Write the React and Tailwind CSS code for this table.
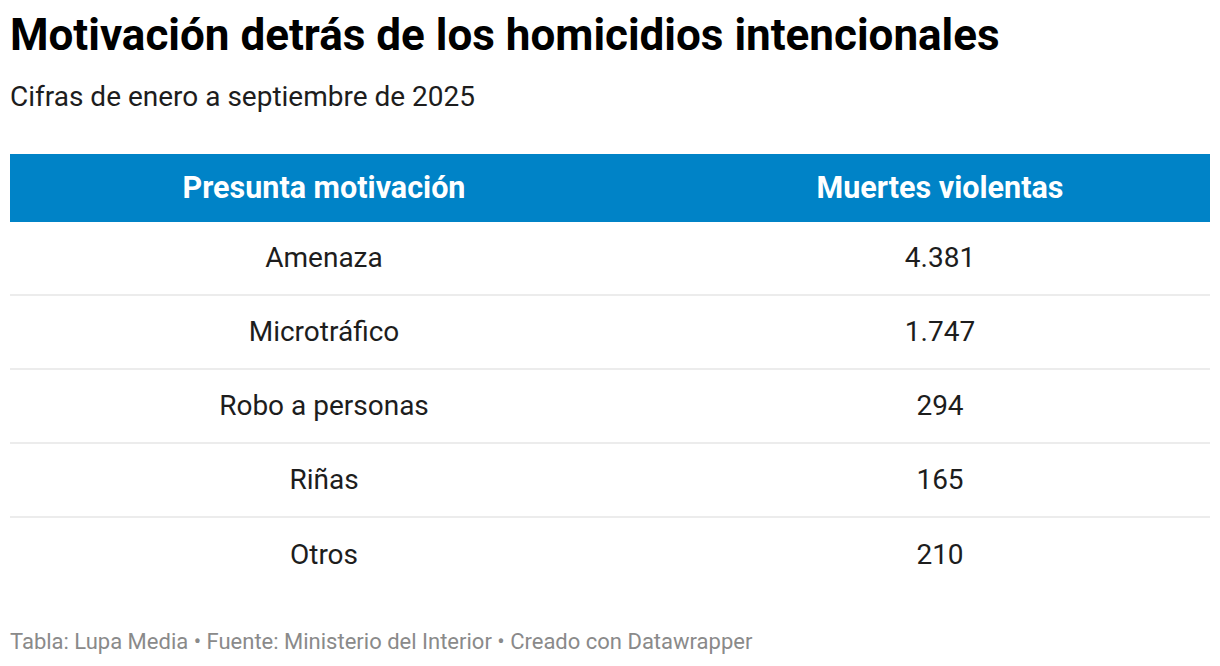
const rows = [
  ["Amenaza", "4.381"],
  ["Microtráfico", "1.747"],
  ["Robo a personas", "294"],
  ["Riñas", "165"],
  ["Otros", "210"],
];

export default function App() {
  return (
    <div className="bg-white min-h-screen w-[1220px] px-[10px] pt-[10px] font-['Roboto',sans-serif] text-[#1d1d1d]">
      <h1 className="text-[44px] font-bold leading-[50px] text-black">
        Motivación detrás de los homicidios intencionales
      </h1>
      <p className="text-[28px] leading-[34px] mt-[20px]">
        Cifras de enero a septiembre de 2025
      </p>

      {/* Table */}
      <div className="mt-[40px]">
        <div className="grid grid-cols-[628px_1fr] bg-[#0083c7] h-[68px] items-center text-white font-bold text-[30.5px]">
          <div className="text-center">Presunta motivación</div>
          <div className="text-center pl-[32px]">Muertes violentas</div>
        </div>
        {rows.map(([label, value], i) => (
          <div
            key={label}
            className={
              i < rows.length - 1
                ? "grid grid-cols-[628px_1fr] h-[74px] items-center text-[28px] border-b-2 border-[#ececec]"
                : "grid grid-cols-[628px_1fr] h-[74px] items-center text-[28px]"
            }
          >
            <div className="text-center">{label}</div>
            <div className="text-center pl-[32px]">{value}</div>
          </div>
        ))}
      </div>

      <p className="mt-[37px] text-[22px] leading-[26px] text-[#8a8a8a]">
        Tabla: Lupa Media • Fuente: Ministerio del Interior • Creado con Datawrapper
      </p>
    </div>
  );
}
